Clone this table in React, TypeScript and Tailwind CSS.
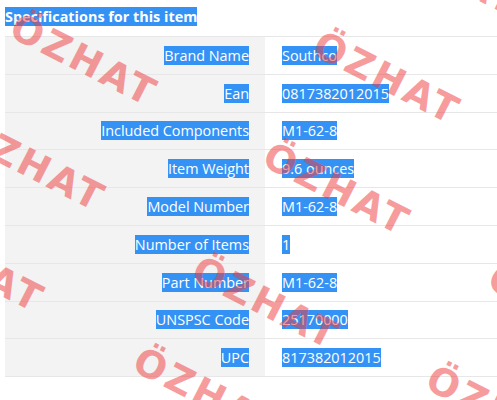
import React from 'react';

const specs: [string, string][] = [
  ['Brand Name', 'Southco'],
  ['Ean', '0817382012015'],
  ['Included Components', 'M1-62-8'],
  ['Item Weight', '9.6 ounces'],
  ['Model Number', 'M1-62-8'],
  ['Number of Items', '1'],
  ['Part Number', 'M1-62-8'],
  ['UNSPSC Code', '25170000'],
  ['UPC', '817382012015'],
];

// centre of the "Ö" of each watermark stamp
const stamps: [number, number][] = [
  [89, -75],
  [27, 32],
  [-25, 137],
  [-86, 238],
  [330, 50],
  [390, -58],
  [280, 161],
  [209, 275],
  [150, 366],
  [505, 283],
  [443, 384],
];

const Selected = ({ children }: { children: React.ReactNode }) => (
  <span className="bg-[#3592f5] text-white">{children}</span>
);

const Watermark = ({ x, y }: { x: number; y: number }) => (
  <span
    className="absolute whitespace-nowrap font-['DejaVu_Sans',sans-serif] text-[38px] font-bold leading-none tracking-[3px] text-[#f03c3c] opacity-50 pointer-events-none select-none"
    style={{
      left: x - 16,
      top: y - 20,
      transformOrigin: '16px 20px',
      transform: 'rotate(27deg)',
    }}
  >
    ÖZHAT
  </span>
);

export default function App() {
  return (
    <div className="relative w-[497px] h-[400px] overflow-hidden bg-white font-['Open_Sans',sans-serif] text-[14.4px] leading-[19px]">
      <div className="pl-[5px] pt-[7px]">
        <h2 className="font-bold">
          <Selected>Specifications for this item</Selected>
        </h2>

        <div className="mt-[10px] border-t border-[#e7e7e7]">
          {specs.map(([label, value]) => (
            <div key={label} className="flex h-[37.8px] border-b border-[#e7e7e7]">
              <div className="w-[260px] shrink-0 bg-[#f3f3f3] flex items-center justify-end pr-4">
                <Selected>{label}</Selected>
              </div>
              <div className="flex-1 flex items-center pl-[17px]">
                <Selected>{value}</Selected>
              </div>
            </div>
          ))}
        </div>
      </div>

      {stamps.map(([x, y], i) => (
        <Watermark key={i} x={x} y={y} />
      ))}
    </div>
  );
}
